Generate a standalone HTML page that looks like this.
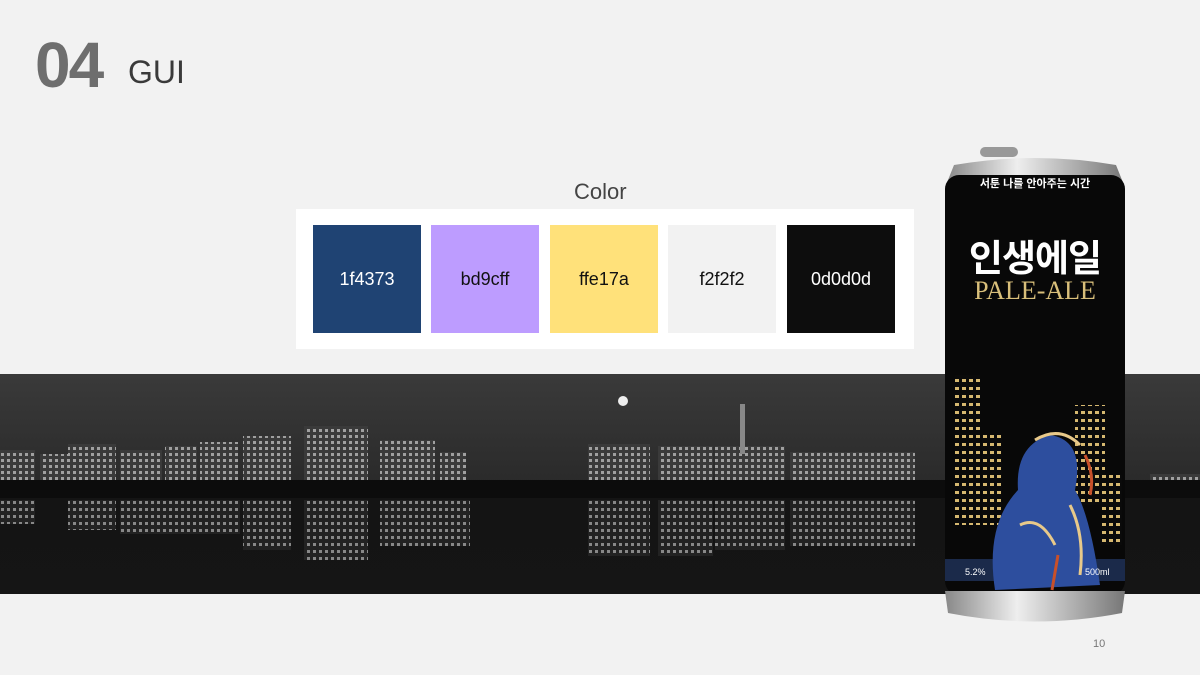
<!DOCTYPE html>
<html><head><meta charset="utf-8"><style>
*{margin:0;padding:0;box-sizing:border-box}
body{width:1200px;height:675px;background:#f2f2f2;position:relative;overflow:hidden;font-family:"Liberation Sans","Noto Sans CJK KR",sans-serif}
.abs{position:absolute}
.sw{position:absolute;top:225px;width:108px;height:108px;display:flex;align-items:center;justify-content:center;font-size:18px;color:#111}
</style></head><body>
<div class="abs" style="left:35px;top:30px;font-size:64px;font-weight:bold;color:#6e6e6e;letter-spacing:-2px;line-height:70px">04</div>
<div class="abs" style="left:128px;top:52px;font-size:32px;color:#3a3a3a;line-height:40px">GUI</div>
<div class="abs" style="left:574px;top:179px;font-size:22px;color:#444">Color</div>
<div class="abs" style="left:296px;top:209px;width:618px;height:140px;background:#fff"></div>
<div class="sw" style="left:313px;background:#1f4373;color:#fff">1f4373</div>
<div class="sw" style="left:431px;background:#bd9cff">bd9cff</div>
<div class="sw" style="left:550px;background:#ffe17a">ffe17a</div>
<div class="sw" style="left:668px;background:#f2f2f2">f2f2f2</div>
<div class="sw" style="left:787px;background:#0d0d0d;color:#fff">0d0d0d</div>

<svg class="abs" style="left:0;top:374px" width="1200" height="220">
<defs>
<linearGradient id="sky" x1="0" y1="0" x2="0" y2="1"><stop offset="0" stop-color="#3a3a3a"/><stop offset="0.5" stop-color="#2a2a2a"/><stop offset="0.56" stop-color="#141414"/><stop offset="1" stop-color="#151515"/></linearGradient>
<pattern id="win" width="6" height="6" patternUnits="userSpaceOnUse"><rect width="6" height="6" fill="#3a3a3a"/><rect x="1" y="1" width="3" height="3" fill="#a0a0a0"/></pattern>
<pattern id="win2" width="6" height="7" patternUnits="userSpaceOnUse"><rect width="6" height="7" fill="#222"/><rect x="1" y="1" width="3" height="3" fill="#888"/></pattern>
</defs>
<rect width="1200" height="220" fill="url(#sky)"/>
<g fill="url(#win)">
<rect x="0" y="76" width="35" height="40"/><rect x="40" y="80" width="28" height="36"/><rect x="68" y="70" width="48" height="46"/><rect x="120" y="76" width="42" height="40"/><rect x="165" y="72" width="32" height="44"/><rect x="200" y="68" width="38" height="48"/>
<rect x="243" y="62" width="48" height="54"/><rect x="304" y="52" width="64" height="64"/><rect x="380" y="66" width="55" height="50"/><rect x="440" y="78" width="26" height="38"/>
<rect x="588" y="70" width="62" height="46"/><rect x="658" y="72" width="55" height="44"/><rect x="715" y="72" width="70" height="44"/><rect x="790" y="78" width="125" height="38"/><rect x="1150" y="100" width="50" height="16"/>
</g>
<rect x="740" y="30" width="5" height="50" fill="#888"/>
<rect x="0" y="106" width="1200" height="18" fill="#0c0c0c"/>
<g fill="url(#win2)">
<rect x="0" y="126" width="35" height="24"/><rect x="68" y="126" width="48" height="30"/><rect x="120" y="126" width="120" height="34"/><rect x="243" y="126" width="48" height="50"/><rect x="304" y="126" width="64" height="60"/><rect x="380" y="126" width="90" height="46"/>
<rect x="588" y="126" width="62" height="56"/><rect x="658" y="126" width="55" height="56"/><rect x="715" y="126" width="70" height="50"/><rect x="790" y="126" width="125" height="46"/>
</g>
<circle cx="623" cy="27" r="5" fill="#eee"/>
</svg>

<svg class="abs" style="left:940px;top:145px" width="190" height="485">
<defs><linearGradient id="rim" x1="0" x2="1"><stop offset="0" stop-color="#888"/><stop offset=".4" stop-color="#eee"/><stop offset="1" stop-color="#777"/></linearGradient>
<pattern id="cw" width="7" height="8" patternUnits="userSpaceOnUse"><rect width="7" height="8" fill="#0a0a0a"/><rect x="1" y="2" width="4" height="3" fill="#d6b870"/></pattern></defs>
<rect x="40" y="2" width="38" height="10" rx="5" fill="#999"/>
<path d="M14 20 Q95 6 176 20 L184 40 L6 40 Z" fill="url(#rim)"/>
<rect x="5" y="30" width="180" height="420" rx="14" fill="#080808"/>
<path d="M5 446 L185 446 L182 468 Q95 485 8 468 Z" fill="url(#rim)"/>
<rect x="5" y="414" width="180" height="22" fill="#1b2a4a"/>
<g fill="url(#cw)"><rect x="15" y="230" width="25" height="150"/><rect x="42" y="290" width="20" height="90"/><rect x="135" y="260" width="30" height="100"/><rect x="160" y="330" width="22" height="70"/></g>
<path d="M78 345 Q75 300 110 290 Q145 295 135 345 Q150 370 160 440 L55 445 Q45 380 78 345 Z" fill="#2d4e9e"/>
<path d="M95 295 Q120 280 140 300" stroke="#e8c98a" stroke-width="3" fill="none"/>
<path d="M80 380 Q100 370 115 400 M130 360 Q145 390 140 430" stroke="#e8c98a" stroke-width="3" fill="none"/>
<path d="M145 310 Q155 330 150 350 M112 445 L118 410" stroke="#c8502a" stroke-width="3" fill="none"/>
</svg>
<div class="abs" style="left:945px;top:175px;width:180px;text-align:center;color:#fff;font-size:11px;font-weight:bold">서툰 나를 안아주는 시간</div>
<div class="abs" style="left:945px;top:228px;width:180px;text-align:center;color:#fff;font-size:37px;font-weight:bold;letter-spacing:-1px">인생에일</div>
<div class="abs" style="left:945px;top:276px;width:180px;text-align:center;color:#d9bf7a;font-size:26px;font-family:'Liberation Serif',serif">PALE-ALE</div>
<div class="abs" style="left:965px;top:567px;color:#fff;font-size:9px">5.2%</div>
<div class="abs" style="left:1085px;top:567px;color:#fff;font-size:9px">500ml</div>
<div class="abs" style="left:1093px;top:638px;font-size:11px;color:#777">10</div>
</body></html>
